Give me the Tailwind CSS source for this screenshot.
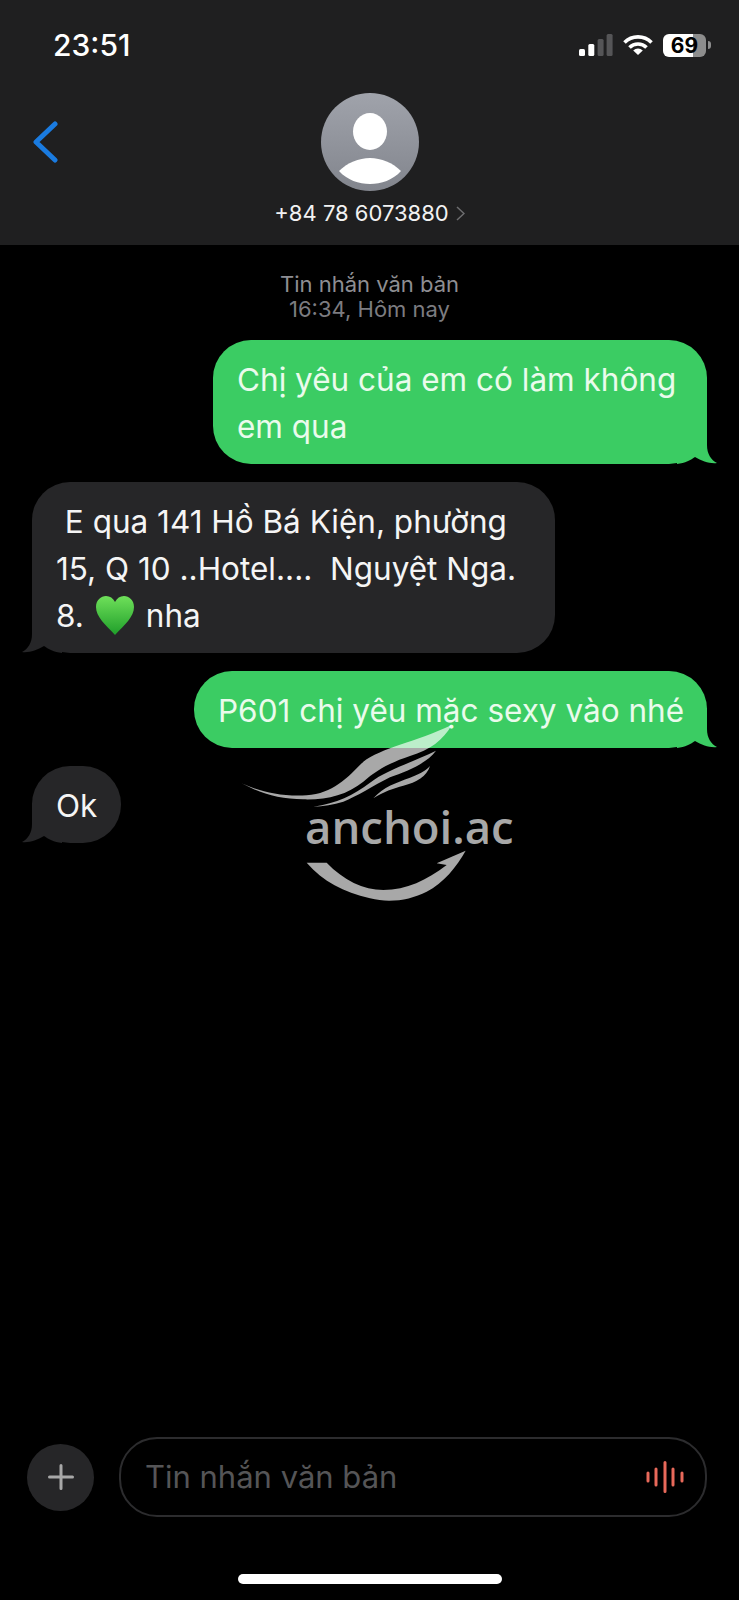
<!DOCTYPE html>
<html lang="vi">
<head>
<meta charset="UTF-8">
<meta name="viewport" content="width=device-width, initial-scale=1.0">
<title>Tin nhắn</title>
<script src="https://cdn.jsdelivr.net/npm/@tailwindcss/browser@4"></script>
</head>
<body class="bg-black">
<div class="relative w-[739px] h-[1600px] overflow-hidden flex flex-col bg-black text-white font-['Inter','Noto_Sans',sans-serif]">

  <!-- Header -->
  <header class="h-[245px] shrink-0 bg-[#1f1f20]">
    <div class="flex items-center justify-between h-[60px] pt-[30px] pl-[53px] pr-[28px]">
      <span class="text-[30px] font-medium leading-[30px]">23:51</span>
      <div class="flex items-center">
        <svg class="w-[34px] h-[23px]" viewBox="0 0 34 23">
          <rect x="0" y="15" width="6" height="7" rx="1.5" fill="#fff"/>
          <rect x="9.300" y="10" width="6" height="12" rx="1.5" fill="#fff"/>
          <rect x="18.600" y="5" width="6" height="17" rx="1.5" fill="#555557"/>
          <rect x="27.600" y="0" width="6" height="22" rx="1.5" fill="#555557"/>
        </svg>
        <svg class="w-[30px] h-[22px] ml-[10px]" viewBox="0 0 30 22" fill="none" stroke="#fff" stroke-width="3.6">
          <path d="M1.5 8.5A19 19 0 0 1 28.500 8.500"/>
          <path d="M6.5 13.5A12 12 0 0 1 23.5 13.5"/>
          <path d="M15 21L10.2 16.4A7 7 0 0 1 19.8 16.4Z" fill="#fff" stroke="none"/>
        </svg>
        <div class="ml-[10px] w-[43px] h-[23px] rounded-[6px] bg-[linear-gradient(90deg,#fff_70%,#8d8d8d_70%)] flex items-center justify-center text-black text-[21px] font-bold leading-none">69</div>
        <div class="ml-[2px] w-[3px] h-[8px] rounded-r-[3px] bg-[#8d8d8d]"></div>
      </div>
    </div>

    <div class="grid grid-cols-[1fr_auto_1fr] pt-[33px]">
      <div class="pl-[31px] pt-[28px]">
        <svg class="w-[28px] h-[42px]" viewBox="0 0 28 42" fill="none" stroke="#1a7be0" stroke-width="5" stroke-linecap="round" stroke-linejoin="round">
          <path d="M24 3L5 21L24 39"/>
        </svg>
      </div>
      <div class="flex flex-col items-center">
        <svg class="w-[98px] h-[98px]" viewBox="0 0 98 98">
          <defs>
            <linearGradient id="av" x1="0" y1="0" x2="0" y2="1">
              <stop offset="0" stop-color="#a0a3ab"/>
              <stop offset="1" stop-color="#82858d"/>
            </linearGradient>
          </defs>
          <circle cx="49" cy="49" r="49" fill="url(#av)"/>
          <ellipse cx="49" cy="38.5" rx="17" ry="18.5" fill="#fff"/>
          <path d="M18 78C26 70 38 65 49 65C60 65 72 70 80 78C72 87 60 91 49 91C38 91 26 87 18 78Z" fill="#fff"/>
        </svg>
        <div class="flex items-center mt-[9px] h-[26px]">
          <span class="text-[22px] leading-[26px] text-[#f2f2f2]">+84 78 6073880</span>
          <svg class="w-[9px] h-[15px] ml-[7px]" viewBox="0 0 9 15" fill="none" stroke="#6e6e70" stroke-width="1.5"><path d="M1 1L8 7.5L1 14"/></svg>
        </div>
      </div>
      <div></div>
    </div>
  </header>

  <!-- Messages -->
  <main class="flex-1 flex flex-col px-[32px] pt-[27px]">
    <div class="text-center text-[22px] leading-[25px]">
      <p class="text-[#8e8e93]">Tin nhắn văn bản</p>
      <p class="text-[#7c7c80]">16:34, Hôm nay</p>
    </div>

    <div class="mt-[18px] flex flex-col gap-[18px] text-[31.500px] leading-[47px]">
      <div class="relative self-end w-[494px] rounded-[38px] bg-[#3bcc63] pl-[24px] pt-[16px] pb-[14px] text-[#eafbec]">
        <svg class="absolute -right-[10px] bottom-0 w-[40px] h-[40px]" viewBox="0 0 40 40" fill="#3bcc63"><path d="M30 0V21C30 30 34 36 40 39C33 40 25 37 18 33C14 36 8 39 0 40V0Z"/></svg>
        <p class="relative">Chị yêu của em có làm không<br>em qua</p>
      </div>

      <div class="relative self-start w-[523px] rounded-[38px] bg-[#262628] pl-[24px] pt-[16px] pb-[14px] text-[#f5f5f5]">
        <svg class="absolute -left-[10px] bottom-0 w-[40px] h-[40px] -scale-x-100" viewBox="0 0 40 40" fill="#262628"><path d="M30 0V21C30 30 34 36 40 39C33 40 25 37 18 33C14 36 8 39 0 40V0Z"/></svg>
        <p class="relative whitespace-pre"> E qua 141 Hồ Bá Kiện, phường</p>
        <p class="relative whitespace-pre">15, Q 10 ..Hotel....  Nguyệt Nga.</p>
        <p class="relative flex items-center">8.<svg class="w-[40px] h-[40px] ml-[11px] mr-[11px]" viewBox="0 0 40 40"><defs><linearGradient id="hg" x1="0" y1="0" x2="0" y2="1"><stop offset="0" stop-color="#6fe05a"/><stop offset="1" stop-color="#1f9e2a"/></linearGradient></defs><path d="M20 39C10 28 1 21 1 11C1 4 6 0 11 0C15 0 18 2 20 6C22 2 25 0 29 0C34 0 39 4 39 11C39 21 30 28 20 39Z" fill="url(#hg)"/></svg>nha</p>
      </div>

      <div class="relative self-end w-[513px] rounded-[38px] bg-[#3bcc63] pl-[24px] pt-[16px] pb-[14px] text-[#eafbec]">
        <svg class="absolute -right-[10px] bottom-0 w-[40px] h-[40px]" viewBox="0 0 40 40" fill="#3bcc63"><path d="M30 0V21C30 30 34 36 40 39C33 40 25 37 18 33C14 36 8 39 0 40V0Z"/></svg>
        <p class="relative">P601 chị yêu mặc sexy vào nhé</p>
      </div>

      <div class="relative self-start w-[89px] rounded-[38px] bg-[#262628] pl-[24px] pt-[16px] pb-[14px] text-[#f5f5f5]">
        <svg class="absolute -left-[10px] bottom-0 w-[40px] h-[40px] -scale-x-100" viewBox="0 0 40 40" fill="#262628"><path d="M30 0V21C30 30 34 36 40 39C33 40 25 37 18 33C14 36 8 39 0 40V0Z"/></svg>
        <p class="relative">Ok</p>
      </div>
    </div>
  </main>

  <!-- Composer -->
  <footer class="shrink-0">
    <div class="flex items-center gap-[25px] pl-[27px] pr-[32px]">
      <div class="w-[67px] h-[67px] shrink-0 rounded-full bg-[#262628] flex items-center justify-center">
        <svg class="w-[26px] h-[26px]" viewBox="0 0 26 26" stroke="#a8a8a8" stroke-width="3" stroke-linecap="round"><path d="M13 1.5V24.5M1.5 13H24.5"/></svg>
      </div>
      <div class="flex-1 h-[80px] rounded-[38px] border-2 border-[#2c2c2e] flex items-center justify-between pl-[24px] pr-[21px]">
        <span class="text-[31px] text-[#555557]">Tin nhắn văn bản</span>
        <svg class="w-[38px] h-[32px]" viewBox="0 0 38 32" stroke="#e8695a" stroke-width="3" stroke-linecap="round">
          <path d="M2 12V20M10 8V24M19 1.500V30.500M27 8V24M36 12V20"/>
        </svg>
      </div>
    </div>
    <div class="mt-[57px] mb-[16px] mx-auto w-[264px] h-[10px] rounded-full bg-white"></div>
  </footer>

  <!-- Watermark over the conversation -->
  <div class="absolute left-[230px] top-[720px] w-[300px] h-[190px] pointer-events-none">
    <svg class="absolute inset-0 w-[300px] h-[190px]" viewBox="0 0 900 570" fill="#fff" fill-opacity="0.66">
      <path d="M35 190C90 215 150 230 230 226C310 220 350 175 400 125C450 85 560 65 665 15C640 60 600 90 540 108C480 128 440 150 400 185C350 225 290 240 220 238C150 238 90 220 35 190Z"/>
      <path d="M250 260C320 250 370 225 420 188C470 150 540 130 618 92C590 130 530 155 480 172C430 197 380 230 340 245C310 255 280 258 250 260Z"/>
      <path d="M430 235C460 200 500 188 540 173C565 163 585 155 600 138C590 170 560 187 520 197C490 205 460 215 430 235Z"/>
      <path d="M230 428L290 428C340 480 400 510 460 510C530 510 590 480 650 435L620 430L707 392C680 440 640 490 590 515C540 540 480 550 420 535C340 515 280 485 230 428Z"/>
    </svg>
    <span class="absolute left-[75px] top-[71px] text-[45.500px] leading-[70px] font-semibold text-[#a8a8a8] font-['Open_Sans',sans-serif]">anchoi.ac</span>
  </div>
</div>
</body>
</html>
